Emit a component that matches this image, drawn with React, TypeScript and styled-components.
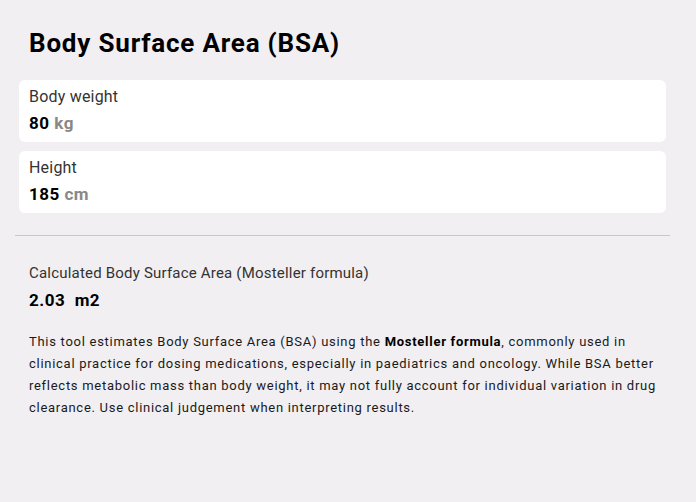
import React from 'react';
import styled, {createGlobalStyle} from 'styled-components';

const GlobalStyle = createGlobalStyle`
  html, body {
    margin: 0;
    padding: 0;
    background: #f1eff2;
  }
  body {
    font-family: Roboto, "Liberation Sans", sans-serif;
    color: #111;
  }
`

const Page = styled.div`
  width: 696px;
  height: 502px;
  box-sizing: border-box;
  padding: 27px 26px 0 15px;
`

const Title = styled.h1`
  margin: 0 0 21px 14px;
  font-size: 26px;
  line-height: 32px;
  font-weight: 700;
  letter-spacing: 0.8px;
  color: #000;
`

const Fields = styled.div`
  display: flex;
  flex-direction: column;
  gap: 9px;
  padding: 0 4px;
`

const Card = styled.div`
  background: #fff;
  border-radius: 6px;
  height: 62px;
  box-sizing: border-box;
  padding: 7px 10px 0;
`

const Label = styled.div<{$size?: number}>`
  font-size: ${p => p.$size || 15}px;
  line-height: 19px;
  color: #333;
  letter-spacing: 0.2px;
`

const Value = styled.div`
  margin-top: 7px;
  font-size: 17px;
  line-height: 20px;
  font-weight: 700;
  letter-spacing: 0.5px;
  color: #000;

  > .unit {
    color: #888;
  }
`

const Divider = styled.hr`
  margin: 22px 0 0;
  border: none;
  border-top: 1px solid #c8c6c9;
`

const Result = styled.section`
  padding: 28px 0 0 14px;
`

const ResultValue = styled.div`
  margin-top: 6px;
  font-size: 17px;
  line-height: 22px;
  font-weight: 700;
  letter-spacing: 0.5px;
  color: #000;
  white-space: pre;
`

const Note = styled.p`
  margin: 20px 0 0;
  font-size: 13px;
  line-height: 22px;
  color: #1a1a1a;
  letter-spacing: 0.72px;
  white-space: nowrap;

  > b {
    font-weight: 700;
    color: #000;
  }
`

const fields = [
  {label: 'Body weight', value: '80', unit: 'kg'},
  {label: 'Height', value: '185', unit: 'cm'},
]

export default function App() {
  return (
    <Page>
      <GlobalStyle/>
      <Title>Body Surface Area (BSA)</Title>
      <Fields>
        {fields.map(field =>
          <Card key={field.label}>
            <Label $size={16}>{field.label}</Label>
            <Value>{field.value} <span className="unit">{field.unit}</span></Value>
          </Card>
        )}
      </Fields>
      <Divider/>
      <Result>
        <Label>Calculated Body Surface Area (Mosteller formula)</Label>
        <ResultValue>{'2.03  m2'}</ResultValue>
        <Note>
          This tool estimates Body Surface Area (BSA) using the <b>Mosteller formula</b>, commonly used in<br/>
          clinical practice for dosing medications, especially in paediatrics and oncology. While BSA better<br/>
          reflects metabolic mass than body weight, it may not fully account for individual variation in drug<br/>
          clearance. Use clinical judgement when interpreting results.
        </Note>
      </Result>
    </Page>
  );
}
